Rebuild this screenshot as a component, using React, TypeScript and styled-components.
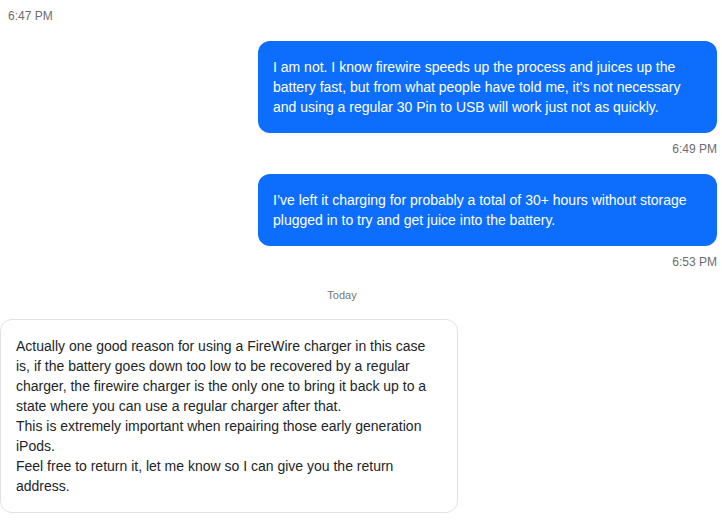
import React from 'react';
import styled, { createGlobalStyle } from 'styled-components';

const GlobalStyle = createGlobalStyle`
  html, body {
    margin: 0;
    padding: 0;
    background: #ffffff;
  }
  body {
    font-family: "Liberation Sans", Arial, sans-serif;
    color: #212529;
  }
`;

const Thread = styled.div`
  width: 722px;
  height: 524px;
  overflow: hidden;
  box-sizing: border-box;
  padding: 8px 5px 0 0;
  display: flex;
  flex-direction: column;
`;

const Group = styled.div<{ $out?: boolean }>`
  display: flex;
  flex-direction: column;
  align-items: ${(p) => (p.$out ? 'flex-end' : 'flex-start')};
  gap: 8px;
  margin-bottom: 17px;
`;

const Time = styled.div<{ $left?: boolean }>`
  font-size: 12px;
  line-height: 16px;
  color: #6c6c6c;
  padding-left: ${(p) => (p.$left ? '8px' : '0')};
`;

const Bubble = styled.div<{ $out?: boolean }>`
  box-sizing: border-box;
  width: ${(p) => (p.$out ? '459px' : '458px')};
  padding: 16px 15px;
  border-radius: 12px;
  font-size: 14px;
  line-height: 20px;
  background: ${(p) => (p.$out ? '#0d6efd' : '#ffffff')};
  color: ${(p) => (p.$out ? '#ffffff' : '#212529')};
  border: ${(p) => (p.$out ? 'none' : '1px solid #e2e2e2')};
`;

const DayLabel = styled.div`
  font-size: 11px;
  line-height: 16px;
  color: #767676;
  text-align: center;
  padding-right: 33px;
  margin-bottom: 16px;
`;

const App = () => {
  return (
    <>
      <GlobalStyle />
      <Thread>
        <Group>
          <Time $left>6:47 PM</Time>
        </Group>
        <Group $out>
          <Bubble $out>
            I am not. I know firewire speeds up the process and juices up the
            <br />
            battery fast, but from what people have told me, it’s not necessary
            <br />
            and using a regular 30 Pin to USB will work just not as quickly.
          </Bubble>
          <Time>6:49 PM</Time>
        </Group>
        <Group $out>
          <Bubble $out>
            I’ve left it charging for probably a total of 30+ hours without storage
            <br />
            plugged in to try and get juice into the battery.
          </Bubble>
          <Time>6:53 PM</Time>
        </Group>
        <DayLabel>Today</DayLabel>
        <Group>
          <Bubble>
            Actually one good reason for using a FireWire charger in this case
            <br />
            is, if the battery goes down too low to be recovered by a regular
            <br />
            charger, the firewire charger is the only one to bring it back up to a
            <br />
            state where you can use a regular charger after that.
            <br />
            This is extremely important when repairing those early generation
            <br />
            iPods.
            <br />
            Feel free to return it, let me know so I can give you the return
            <br />
            address.
          </Bubble>
        </Group>
      </Thread>
    </>
  );
};

export default App;
